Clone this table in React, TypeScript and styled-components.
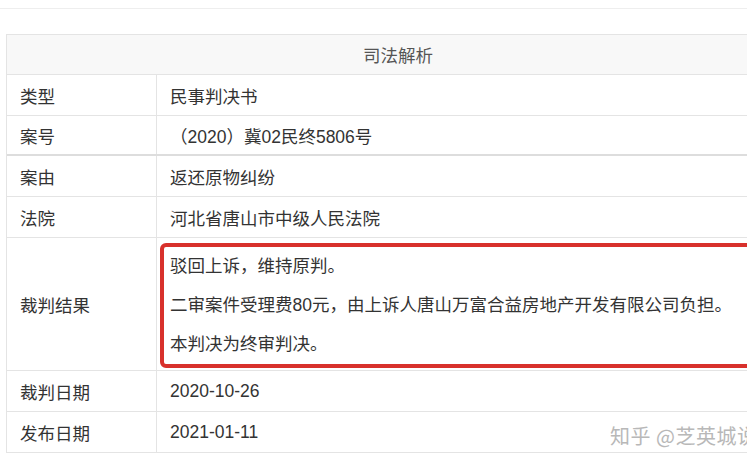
import styled, { createGlobalStyle } from 'styled-components';

const GlobalStyle = createGlobalStyle`
  html, body {
    margin: 0;
    padding: 0;
    background: #ffffff;
    overflow: hidden;
  }
  body {
    font-family: "Liberation Sans", "Noto Sans CJK SC", sans-serif;
    color: #333333;
  }
`;

const rows: { label: string; value: string }[] = [
  { label: '类型', value: '民事判决书' },
  { label: '案号', value: '（2020）冀02民终5806号' },
  { label: '案由', value: '返还原物纠纷' },
  { label: '法院', value: '河北省唐山市中级人民法院' },
];

const dates: { label: string; value: string }[] = [
  { label: '裁判日期', value: '2020-10-26' },
  { label: '发布日期', value: '2021-01-11' },
];

const verdict = [
  '驳回上诉，维持原判。',
  '二审案件受理费80元，由上诉人唐山万富合益房地产开发有限公司负担。',
  '本判决为终审判决。',
];

export default function App() {
  return (
    <>
      <GlobalStyle />
      <Page>
        <TopRule />
        <Table>
          <HeaderRow>司法解析</HeaderRow>
          {rows.map((r, i) => (
            <Row key={r.label} $thick={i === 1}>
              <Label>{r.label}</Label>
              <Value>{r.value}</Value>
            </Row>
          ))}
          <Row $tall>
            <Label>裁判结果</Label>
            <VerdictCell>
              <Highlight>
                {verdict.map((line) => (
                  <VerdictLine key={line}>{line}</VerdictLine>
                ))}
              </Highlight>
            </VerdictCell>
          </Row>
          {dates.map((r) => (
            <Row key={r.label}>
              <Label>{r.label}</Label>
              <Value>{r.value}</Value>
            </Row>
          ))}
        </Table>
        <Watermark>知乎 @芝英城说</Watermark>
      </Page>
    </>
  );
}

const Page = styled.div`
  position: relative;
  width: 747px;
  height: 469px;
  overflow: hidden;
  padding-top: 8px;
  box-sizing: border-box;
`;

const TopRule = styled.div`
  height: 0;
  border-top: 1px solid #eeeeee;
  margin-bottom: 25px;
`;

const Table = styled.div`
  margin-left: 6px;
  width: 782px;
  border-top: 1px solid #e4e4e4;
  border-left: 1px solid #e4e4e4;
  border-right: 1px solid #e4e4e4;
  font-size: 17.5px;
`;

const HeaderRow = styled.div`
  height: 40px;
  box-sizing: border-box;
  display: flex;
  align-items: center;
  justify-content: center;
  background: #f8f8f8;
  color: #555555;
  border-bottom: 1px solid #e4e4e4;
`;

const Row = styled.div<{ $thick?: boolean; $tall?: boolean }>`
  display: grid;
  grid-template-columns: 150px 1fr;
  height: ${(p) => (p.$tall ? '133px' : p.$thick ? '40px' : '41px')};
  box-sizing: border-box;
  border-bottom: ${(p) => (p.$thick ? '2px solid #dddddd' : '1px solid #e4e4e4')};
`;

const Label = styled.div`
  display: flex;
  align-items: center;
  padding-left: 13px;
  border-right: 1px solid #e4e4e4;
  color: #333333;
`;

const Value = styled.div`
  display: flex;
  align-items: center;
  padding-left: 13px;
  color: #333333;
  white-space: nowrap;
`;

const VerdictCell = styled.div`
  padding: 5px 4px 2px 3px;
  box-sizing: border-box;
  display: flex;
`;

const Highlight = styled.div`
  flex: 1;
  border: 4px solid #d8312c;
  border-radius: 6px;
  padding: 0 0 0 6px;
  display: flex;
  flex-direction: column;
  justify-content: center;
`;

const VerdictLine = styled.p`
  margin: 0;
  height: 39px;
  line-height: 39px;
  white-space: nowrap;
  color: #333333;
`;

const Watermark = styled.div`
  position: absolute;
  left: 610px;
  top: 421px;
  font-size: 20px;
  color: #b8b8b8;
  letter-spacing: 0.5px;
  white-space: nowrap;
  font-family: "Noto Sans CJK SC", sans-serif;
`;
